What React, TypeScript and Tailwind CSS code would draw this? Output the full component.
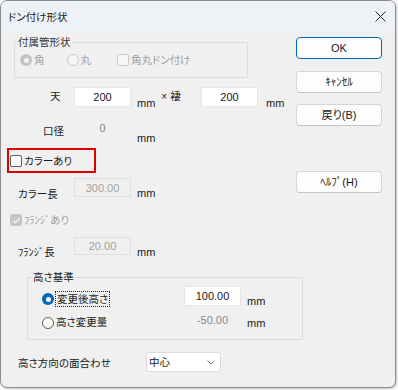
import React from 'react';

const cjk = "text-[10.5px] leading-[14px]";

function Radio({ checked, disabled }: { checked?: boolean; disabled?: boolean }) {
  if (checked && !disabled) {
    return (
      <span className="flex h-[12px] w-[12px] shrink-0 items-center justify-center rounded-full bg-[#0067c0]">
        <span className="h-[5px] w-[5px] rounded-full bg-white" />
      </span>
    );
  }
  if (checked && disabled) {
    return (
      <span className="flex h-[12px] w-[12px] shrink-0 items-center justify-center rounded-full bg-[#c4c4c4]">
        <span className="h-[5px] w-[5px] rounded-full bg-[#f4f4f4]" />
      </span>
    );
  }
  return (
    <span
      className={`block h-[12px] w-[12px] shrink-0 rounded-full border ${
        disabled ? 'border-[#c8c8c8] bg-[#f6f6f6]' : 'border-[#5a5a5a] bg-[#fbfbfb]'
      }`}
    />
  );
}

function Check({ checked, disabled }: { checked?: boolean; disabled?: boolean }) {
  if (checked) {
    return (
      <span className="flex h-[12px] w-[12px] shrink-0 items-center justify-center rounded-[2px] bg-[#c6c6c6]">
        <svg width="9" height="9" viewBox="0 0 9 9" fill="none">
          <path d="M1.5 4.8 L3.6 6.8 L7.6 2.2" stroke="#fafafa" strokeWidth="1.2" />
        </svg>
      </span>
    );
  }
  return (
    <span
      className={`block h-[12px] w-[12px] shrink-0 rounded-[2px] border ${
        disabled ? 'border-[#cacaca] bg-[#f6f6f6]' : 'border-[#5a5a5a] bg-[#fbfbfb]'
      }`}
    />
  );
}

function Field({ value, disabled, h = 'h-[20px]' }: { value: string; disabled?: boolean; h?: string }) {
  return (
    <div
      className={`flex w-[57px] shrink-0 items-center justify-center border ${h} ${
        disabled ? 'border-[#dedede] bg-[#f0f0f0] text-[#a0a0a0]' : 'border-[#e6e6e6] bg-white text-[#1a1a1a]'
      }`}
    >
      {value}
    </div>
  );
}

function DlgButton({ label, primary }: { label: string; primary?: boolean }) {
  return (
    <button
      className={`flex h-[22px] w-[86px] items-center justify-center rounded-[4px] bg-[#fdfdfd] text-[#1a1a1a] ${
        primary ? 'border border-[#0067c0]' : 'border border-[#d6d6d6] border-b-[#c4c4c4]'
      }`}
    >
      {label}
    </button>
  );
}

export default function App() {
  return (
    <div className="h-[390px] w-[398px] bg-white font-['Liberation_Sans','Noto_Sans_CJK_JP',sans-serif] text-[11px] leading-[14px] text-[#1a1a1a] [font-feature-settings:'palt']">
      <div className="flex h-[388px] w-[396px] flex-col overflow-hidden rounded-[7px] border border-[#8c8c8c] bg-[#f0f0f0] shadow-[1px_1px_3px_rgba(0,0,0,0.25)]">
        {/* title bar */}
        <div className="flex h-[29px] shrink-0 items-center justify-between bg-[#eef2f7] pl-[7px] pr-[9px]">
          <span className={`${cjk} mt-[2px] text-[#1a1a1a]`}>ドン付け形状</span>
          <svg width="11" height="11" viewBox="0 0 11 11" className="mt-[1px]">
            <path d="M0.5 0.5 L10.5 10.5 M10.5 0.5 L0.5 10.5" stroke="#1f1f1f" strokeWidth="1" />
          </svg>
        </div>

        <div className="flex">
          {/* left side */}
          <div className="flex w-[294px] flex-col">
            {/* 付属管形状 */}
            <div className="ml-[13px] mt-[12px] h-[36px] w-[234px] border border-[#dcdcdc]">
              <span className={`${cjk} -mt-[8px] ml-[2px] block w-fit bg-[#f0f0f0] px-[1px] text-[#333]`}>
                付属管形状
              </span>
              <div className="flex h-[22px] items-center text-[#a0a0a0]">
                <span className="ml-[5px]"><Radio checked disabled /></span>
                <span className={`${cjk} ml-[2px]`}>角</span>
                <span className="ml-[22px]"><Radio disabled /></span>
                <span className={`${cjk} ml-[2px]`}>丸</span>
                <span className="ml-[26px]"><Check disabled /></span>
                <span className={`${cjk} ml-[2px]`}>角丸ドン付け</span>
              </div>
            </div>

            {/* 天 × 褄 */}
            <div className="mt-[9px] flex h-[20px] items-start">
              <span className={`${cjk} mt-[2px] w-[73px] pl-[49px]`}>天</span>
              <Field value="200" />
              <div className="flex w-[70px] items-start pl-[6px]">
                <span className="mt-[9px]">mm</span>
                <span className="ml-[6px] mt-[3px] text-[10px]">×</span>
                <span className={`${cjk} ml-[3px] mt-[2px]`}>褄</span>
              </div>
              <Field value="200" />
              <span className="ml-[8px] mt-[9px]">mm</span>
            </div>

            {/* 口径 */}
            <div className="mt-[13px] flex h-[22px] items-start">
              <span className={`${cjk} mt-[4px] w-[73px] pl-[42px]`}>口径</span>
              <span className="mt-[1px] w-[57px] text-center text-[#8a8a8a]">0</span>
              <span className="ml-[6px] mt-[11px]">mm</span>
            </div>

            {/* カラーあり */}
            <div className="ml-[6px] mt-[6px] flex h-[25px] w-[89px] items-center border-2 border-[#e00000] pl-[1px]">
              <Check />
              <span className={`${cjk} ml-[2px]`}>カラーあり</span>
            </div>

            {/* カラー長 */}
            <div className="mt-[5px] flex h-[22px] items-start">
              <span className={`${cjk} mt-[9px] w-[73px] pl-[17px]`}>カラー長</span>
              <Field value="300.00" disabled h="h-[19px]" />
              <span className="ml-[6px] mt-[8px]">mm</span>
            </div>

            {/* ﾌﾗﾝｼﾞあり */}
            <div className="mt-[11px] flex h-[18px] items-center pl-[9px] text-[#a0a0a0]">
              <Check checked disabled />
              <span className={`${cjk} ml-[2px]`}>ﾌﾗﾝｼﾞあり</span>
            </div>

            {/* ﾌﾗﾝｼﾞ長 */}
            <div className="mt-[8px] flex h-[23px] items-start">
              <span className={`${cjk} mt-[8px] w-[73px] pl-[17px]`}>ﾌﾗﾝｼﾞ長</span>
              <Field value="20.00" disabled h="h-[18px]" />
              <span className="ml-[6px] mt-[8px]">mm</span>
            </div>

            {/* 高さ基準 */}
            <div className="ml-[26px] mt-[17px] h-[63px] w-[276px] border border-[#dcdcdc]">
              <span className={`${cjk} -mt-[8px] ml-[4px] block w-fit bg-[#f0f0f0] px-[1px]`}>
                高さ基準
              </span>
              <div className="mt-[2px] flex h-[20px] items-start">
                <span className="ml-[14px] mt-[7px]"><Radio checked /></span>
                <span className="mt-[5px] w-[130px] pl-[1px]">
                  <span className={`${cjk} block w-fit border border-dotted border-[#222] px-[1px] leading-[12px]`}>
                    変更後高さ
                  </span>
                </span>
                <Field value="100.00" />
                <span className="ml-[6px] mt-[8px]">mm</span>
              </div>
              <div className="mt-[4px] flex h-[20px] items-start">
                <span className="ml-[14px] mt-[7px]"><Radio /></span>
                <span className={`${cjk} mt-[5px] w-[130px] pl-[2px]`}>高さ変更量</span>
                <span className="mt-[3px] w-[57px] text-center text-[#8a8a8a]">-50.00</span>
                <span className="ml-[6px] mt-[6px]">mm</span>
              </div>
            </div>

            {/* 高さ方向の面合わせ */}
            <div className="mt-[12px] flex h-[20px] items-center">
              <span className={`${cjk} mt-[2px] w-[145px] pl-[17px]`}>高さ方向の面合わせ</span>
              <div className="flex h-[20px] w-[75px] items-center justify-between rounded-[3px] border border-[#dcdcdc] bg-white pl-[2px] pr-[5px]">
                <span className={cjk}>中心</span>
                <svg width="8" height="5" viewBox="0 0 8 5">
                  <path d="M0.5 0.5 L4 4 L7.5 0.5" stroke="#7a7a7a" fill="none" strokeWidth="1" />
                </svg>
              </div>
            </div>
          </div>

          {/* buttons */}
          <div className="ml-[1px] flex flex-col pt-[7px]">
            <DlgButton label="OK" primary />
            <div className="mt-[12px]"><DlgButton label="ｷｬﾝｾﾙ" /></div>
            <div className="mt-[11px]"><DlgButton label="戻り(B)" /></div>
            <div className="mt-[45px]"><DlgButton label="ﾍﾙﾌﾟ(H)" /></div>
          </div>
        </div>
      </div>
    </div>
  );
}
